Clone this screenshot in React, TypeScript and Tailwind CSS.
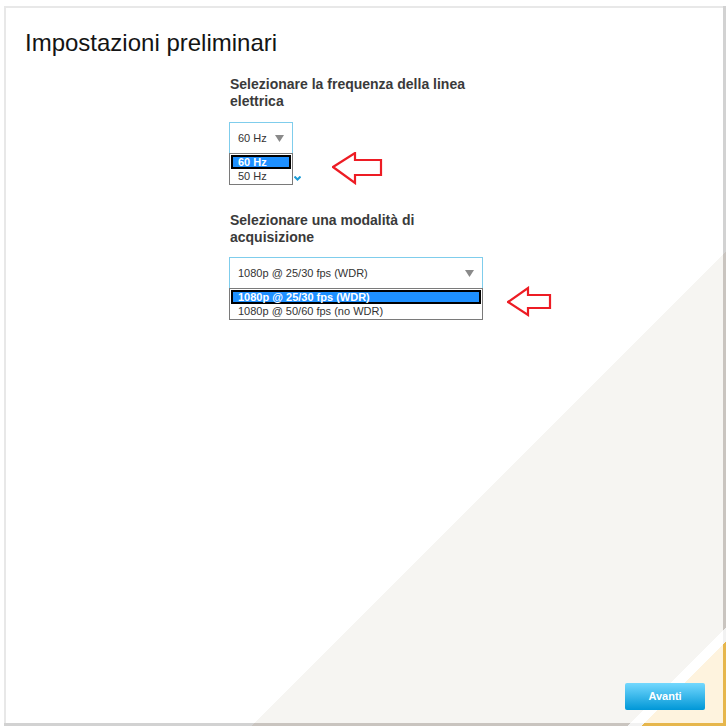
function Caret() {
  return (
    <svg width="9" height="7" viewBox="0 0 9 7" className="shrink-0">
      <polygon points="0,0 9,0 4.5,7" fill="#8a8a8a" />
    </svg>
  );
}

type Option = { label: string; selected?: boolean };

function OpenSelect({ value, options, width }: { value: string; options: Option[]; width: string }) {
  return (
    <div className={`relative -ml-[1px] ${width}`}>
      <div className="flex items-center justify-between h-[32px] pl-[8px] pr-[8px] border border-[#7fcdec] bg-white text-[11px] text-[#333]">
        <span>{value}</span>
        <Caret />
      </div>
      <ul className="absolute left-0 top-full -mt-[1px] w-full border border-[#7a7a7a] bg-white p-[1px] z-10">
        {options.map((o) => (
          <li
            key={o.label}
            className={
              o.selected
                ? 'flex items-center h-[14px] pl-[5px] border-2 border-black bg-[#1e90ff] text-white font-bold text-[11px] leading-none'
                : 'flex items-center h-[14px] pl-[5px] border-2 border-transparent text-[#333] text-[11px] leading-none'
            }
          >
            {o.label}
          </li>
        ))}
      </ul>
    </div>
  );
}

function RedArrow({ className, box, points }: { className: string; box: string; points: string }) {
  const [, , w, h] = box.split(' ').map(Number);
  return (
    <svg className={`absolute ${className}`} width={w} height={h} viewBox={box}>
      <polygon points={points} fill="none" stroke="#ed1c24" strokeWidth="2.2" />
    </svg>
  );
}

export default function App() {
  return (
    <div className="w-[728px] h-[728px] bg-white pl-[4px] pt-[6px] font-['Liberation_Sans',Arial,sans-serif]">
      <div className="w-[722px] h-[720px] pr-[3px] pb-[3px] bg-[linear-gradient(135deg,#d2d2d2_684px,#c9c4bf_684px,#c9c4bf_950px,#f2f2f2_950px,#f2f2f2_960px,#e6b64c_960px)]">
        <div className="relative flex flex-col h-full border-t-2 border-l-2 border-[#e8e8e8] bg-[linear-gradient(135deg,#ffffff_681px,#f6f5f2_681px,#f6f5f2_947px,#ffffff_947px,#ffffff_957px,#fef3de_957px)]">
          <h1 className="mt-[21px] ml-[19px] text-[24px] leading-[28px] text-[#141414]">Impostazioni preliminari</h1>

          <div className="ml-[224px] flex flex-col">
            <p className="mt-[19px] w-[260px] text-[14px] leading-[17px] font-bold text-[#3a3a3a]">
              Selezionare la frequenza della linea elettrica
            </p>
            <div className="mt-[12px]">
              <OpenSelect
                width="w-[64px]"
                value="60 Hz"
                options={[{ label: '60 Hz', selected: true }, { label: '50 Hz' }]}
              />
            </div>

            <p className="mt-[58px] w-[260px] text-[14px] leading-[17px] font-bold text-[#3a3a3a]">
              Selezionare una modalità di acquisizione
            </p>
            <div className="mt-[11px]">
              <OpenSelect
                width="w-[254px]"
                value="1080p @ 25/30 fps (WDR)"
                options={[{ label: '1080p @ 25/30 fps (WDR)', selected: true }, { label: '1080p @ 50/60 fps (no WDR)' }]}
              />
            </div>
          </div>

          <svg className="absolute left-[288px] top-[168px]" width="7" height="5" viewBox="0 0 7 5">
            <polyline points="0.5,0.5 3.5,3.5 6.5,0.5" fill="none" stroke="#1b9bd6" strokeWidth="2" />
          </svg>

          <RedArrow
            className="left-[326px] top-[144px]"
            box="332 152 51 33"
            points="333,167 355,153 355,160 381,160 381,175 355,175 355,183"
          />
          <RedArrow
            className="left-[501px] top-[278px]"
            box="507 286 46 32"
            points="508,302 528,288 528,295 550,295 550,308 528,308 528,315"
          />

          <button className="mt-auto self-end mr-[18px] mb-[13px] w-[80px] h-[27px] rounded-[2px] bg-[linear-gradient(to_bottom,#74d8fe,#0097d7)] text-white text-[11px] font-bold">
            Avanti
          </button>
        </div>
      </div>
    </div>
  );
}
